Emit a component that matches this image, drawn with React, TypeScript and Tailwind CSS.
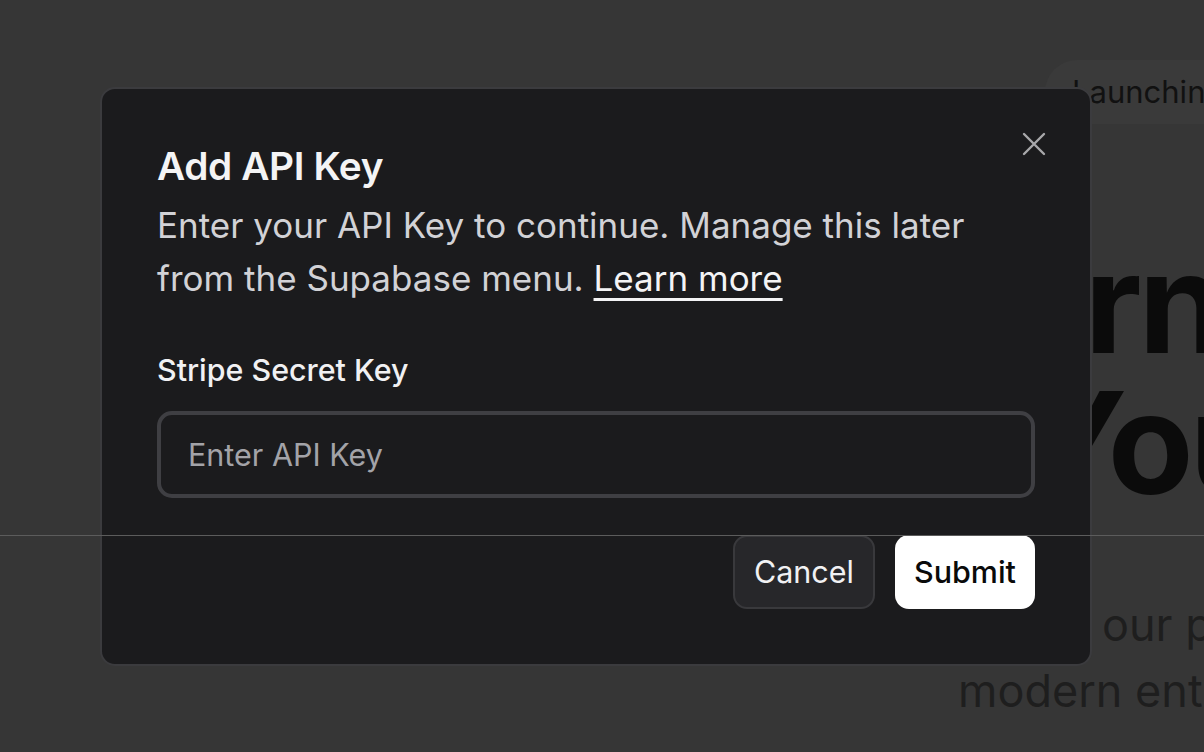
import { useState } from "react";

// Dialog sitting on top of a dimmed landing page
function PageBehind() {
  return (
    <div className="flex flex-col items-start whitespace-nowrap text-[#0b0b0b]">
      <div className="ml-[1045px] mt-[60px] flex h-[64px] items-center rounded-full bg-[#3a3a3a] pl-[27px] pr-[40px] text-[31px] text-[#111]">
        Launching soon
      </div>
      <div className="ml-[852px] mt-[108px] text-[140px] font-bold leading-[140px] tracking-[-0.03em]">
        Learn
      </div>
      <div className="ml-[1025px] text-[140px] font-bold leading-[140px] tracking-[-0.03em]">
        Your
      </div>
      <p className="ml-[1102px] mt-[80px] text-[45px] leading-[66px] text-[#1e1e1e]">
        our platform
      </p>
      <p className="ml-[958px] text-[45px] leading-[66px] text-[#1e1e1e]">
        modern enterprise
      </p>
    </div>
  );
}

function CloseIcon() {
  return (
    <svg viewBox="0 0 24 24" className="size-[24px]" fill="none" stroke="currentColor" strokeWidth={2.4} strokeLinecap="round">
      <path d="M2 2L22 22M22 2L2 22" />
    </svg>
  );
}

export default function App() {
  const [value, setValue] = useState("");

  return (
    <div className="relative h-[752px] w-[1204px] overflow-hidden bg-[#363636] font-['Inter','Noto_Sans',sans-serif]">
      <PageBehind />

      {/* Dialog */}
      <div className="absolute left-[100px] top-[87px] w-[992px] rounded-[15px] border-2 border-[#3b3b3e] bg-[#1b1b1d] px-[55px] pb-[55px] pt-[49px]">
        <button
          aria-label="Close"
          className="absolute right-[44px] top-[43px] text-[#a8a8ab]"
        >
          <CloseIcon />
        </button>

        <h2 className="text-[38.8px] font-semibold leading-[56px] tracking-[-0.01em] text-[#f4f4f5]">
          Add API Key
        </h2>
        <p className="mt-[5px] text-[35px] leading-[53px] text-[#d2d2d6]">
          Enter your API Key to continue. Manage this later from the Supabase menu.{" "}
          <a href="#" className="text-[#f4f4f5] underline decoration-[3px] underline-offset-[7px]">
            Learn more
          </a>
        </p>

        <label className="mt-[43px] block text-[30.4px] font-medium leading-[44px] text-[#f1f1f3]">
          Stripe Secret Key
        </label>
        <input
          autoFocus
          value={value}
          onChange={(e) => setValue(e.target.value)}
          placeholder="Enter API Key"
          className="mt-[19px] h-[87px] w-full rounded-[15px] border-[4px] border-[#3f3f43] bg-transparent px-[27px] text-[30.5px] text-white caret-white outline-none placeholder:text-[#a3a3a8]"
        />

        <div className="mt-[37px] flex justify-end gap-[20px]">
          <button className="h-[74px] rounded-[14px] border-2 border-[#39393c] bg-[#27272a] px-[19px] text-[30.5px] text-[#f1f1f3]">
            Cancel
          </button>
          <button className="h-[74px] rounded-[14px] bg-white px-[19px] text-[30.5px] font-medium text-[#0a0a0a]">
            Submit
          </button>
        </div>
      </div>

      {/* thin rule crossing the whole viewport */}
      <div className="absolute inset-x-0 top-[535px] h-px bg-[#5c5c5c]" />
    </div>
  );
}
